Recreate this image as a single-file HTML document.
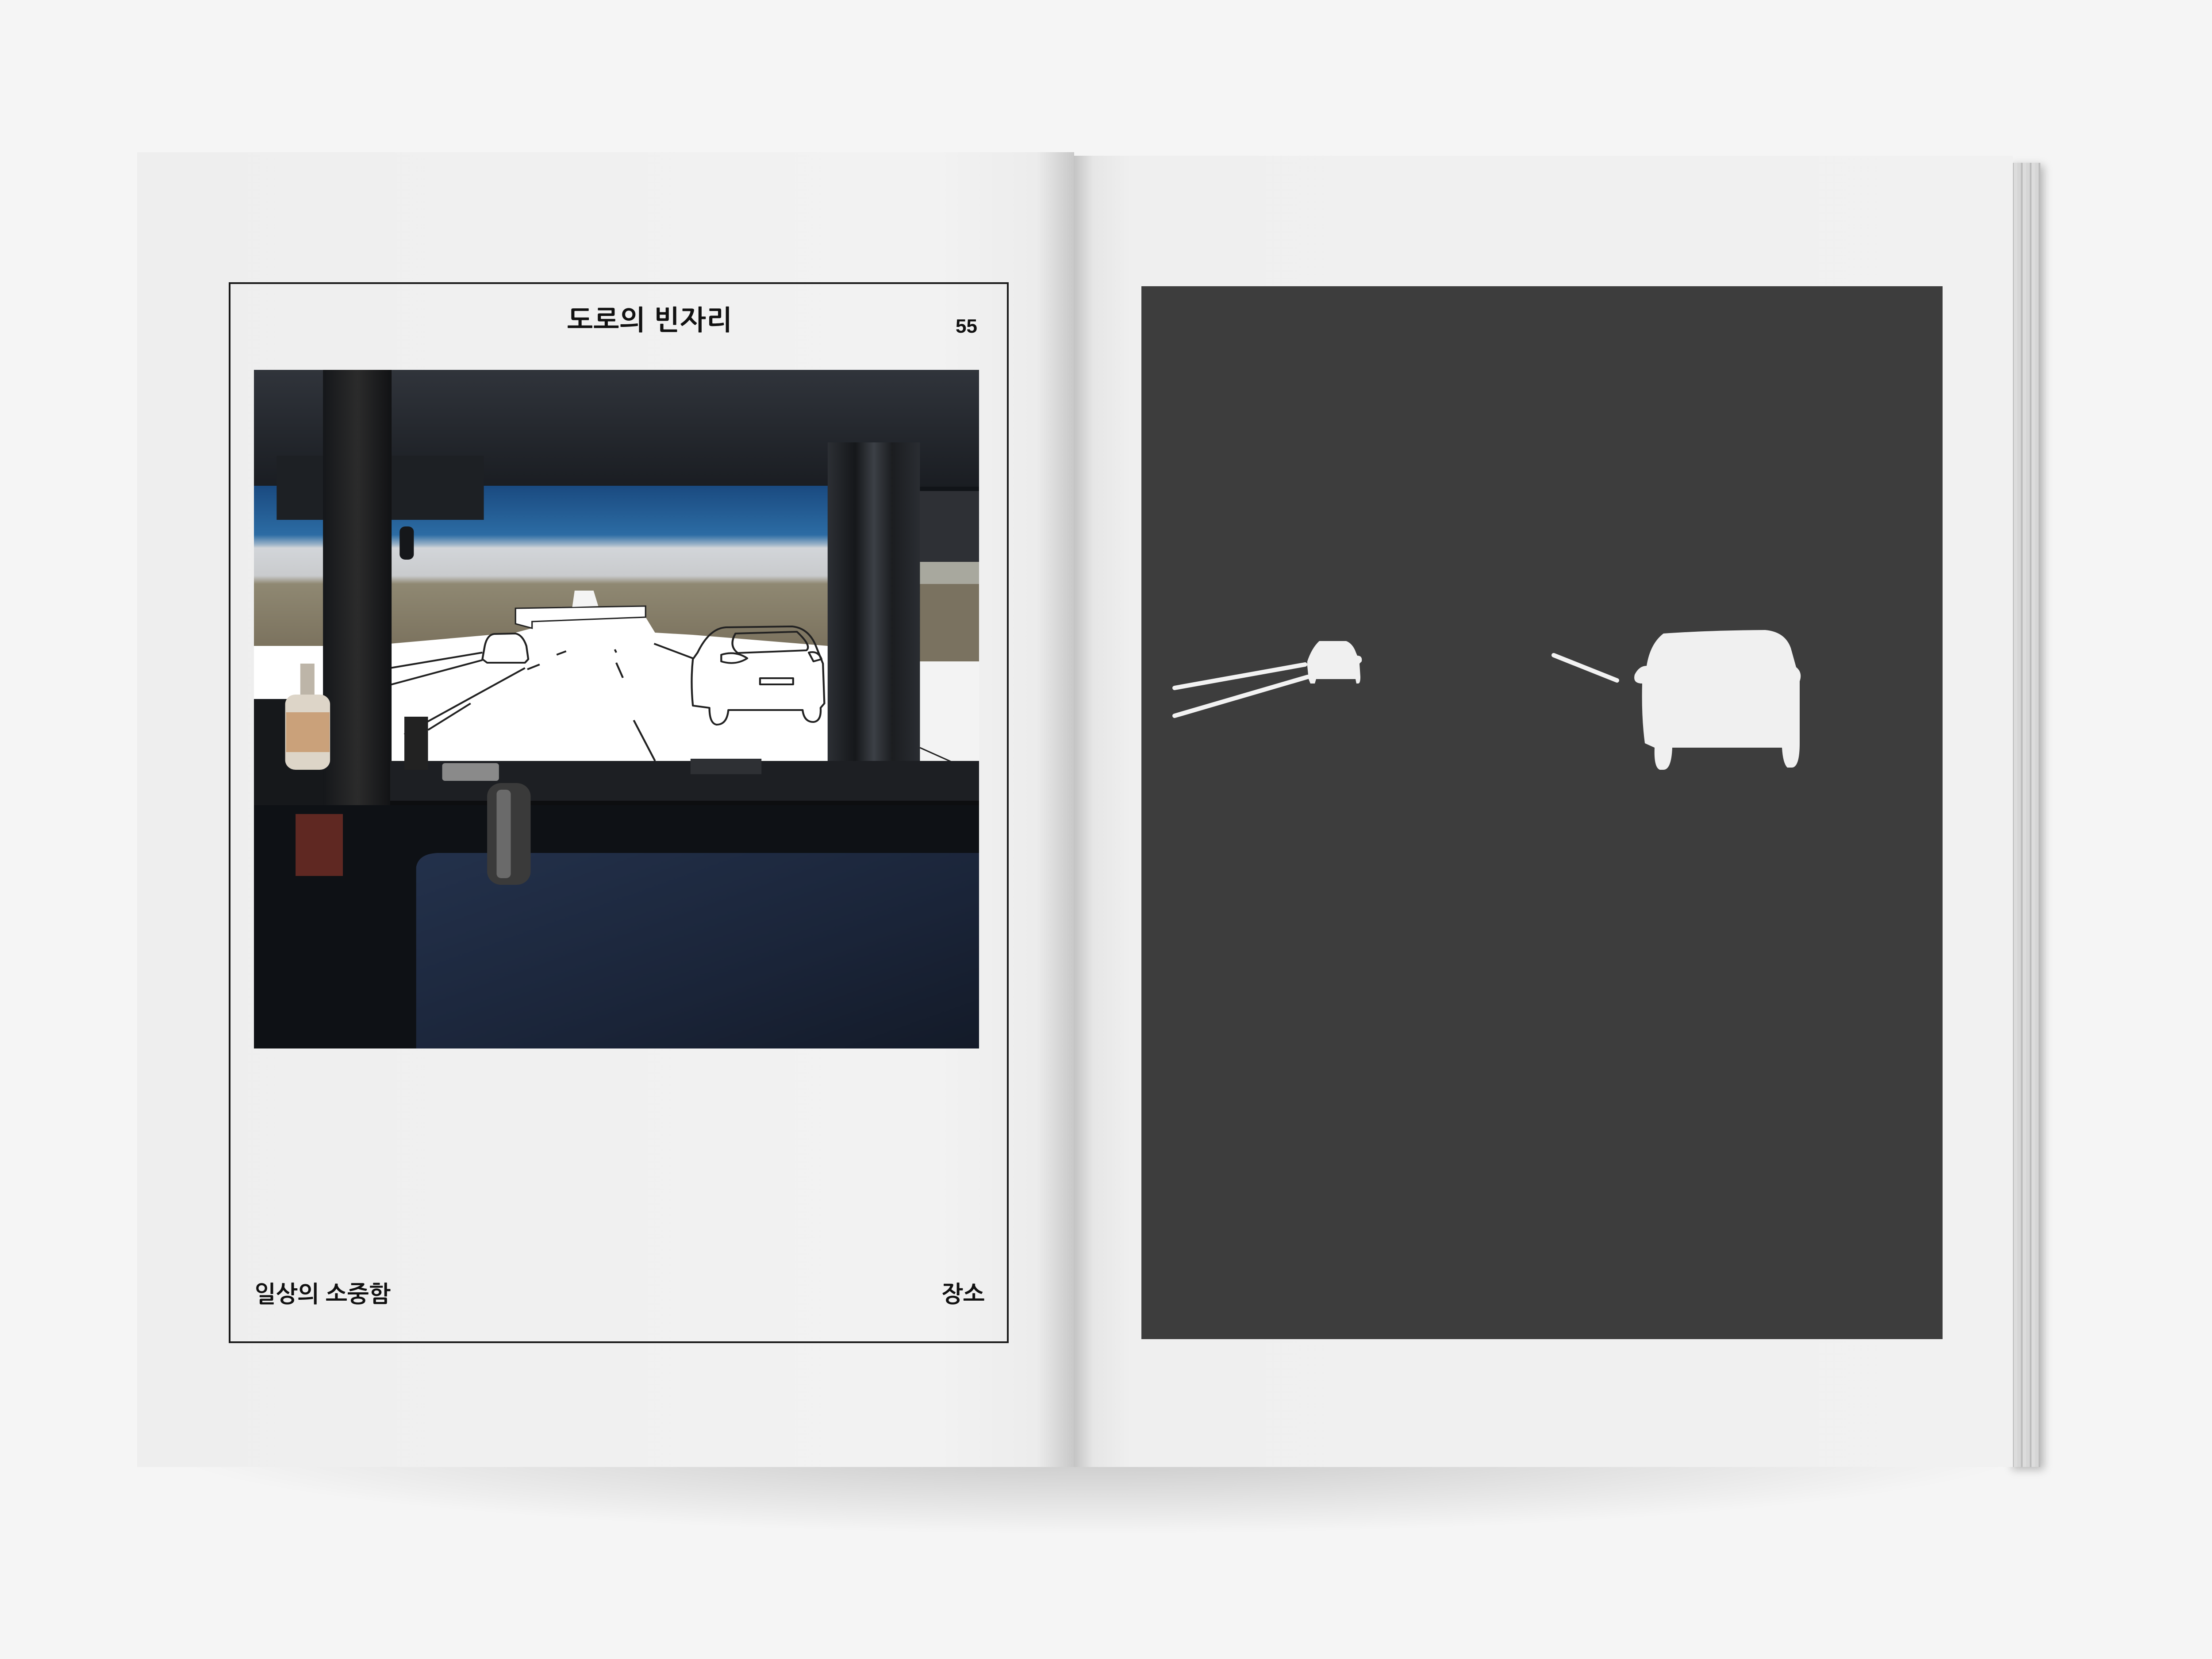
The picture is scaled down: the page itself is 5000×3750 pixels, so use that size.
<!DOCTYPE html>
<html><head><meta charset="utf-8"><style>
html,body{margin:0;padding:0}
body{width:5000px;height:3750px;position:relative;overflow:hidden;background:#f5f5f5;font-family:"Liberation Sans","NanumGothic","Noto Sans CJK KR",sans-serif}
.a{position:absolute}
.t{position:absolute;color:#111;font-family:"Liberation Sans","NanumGothic","Noto Sans CJK KR",sans-serif;font-weight:bold;white-space:nowrap;line-height:1}
</style></head><body>
<div class="a" style="left:330px;top:3230px;width:4300px;height:240px;background:radial-gradient(ellipse at 50% 15%,rgba(0,0,0,.2),rgba(0,0,0,0) 70%)"></div>
<div class="a" style="left:4540px;top:368px;width:72px;height:2948px;background:repeating-linear-gradient(90deg,#d6d6d6 0 8px,#bcbcbc 8px 12px,#dcdcdc 12px 20px);box-shadow:8px 6px 18px rgba(0,0,0,.25)"></div>
<div class="a" style="left:310px;top:344px;width:2118px;height:2972px;background:linear-gradient(90deg,#eeeeee 0%,#f2f2f2 85%,#ececec 96%,#c8c8c8 100%)"></div>
<div class="a" style="left:2428px;top:352px;width:2122px;height:2964px;background:linear-gradient(90deg,#c4c4c4 0%,#e6e6e6 2%,#efefef 6%,#f1f1f1 100%)"></div>
<div class="a" style="left:517px;top:638px;width:1755px;height:2390px;border:4px solid #1a1a1a"></div>
<div class="t" style="left:1282px;top:694px;font-size:62px;letter-spacing:1px">도로의 빈자리</div>
<div class="t" style="left:2160px;top:716px;font-size:44px">55</div>
<div class="t" style="left:575px;top:2900px;font-size:52px">일상의 소중함</div>
<div class="t" style="left:2128px;top:2900px;font-size:52px">장소</div>
<svg class="a" style="left:574px;top:836px" width="1639" height="1534" viewBox="12 16 1533 1534" preserveAspectRatio="none">
  <defs>
    <linearGradient id="sky" x1="0" y1="0" x2="0" y2="1">
      <stop offset="0" stop-color="#1a4a80"/><stop offset=".3" stop-color="#2c6ca4"/>
      <stop offset=".36" stop-color="#9db4c8"/><stop offset=".38" stop-color="#d2d5d9"/><stop offset=".55" stop-color="#c9cbcd"/>
      <stop offset=".6" stop-color="#8f8872"/><stop offset="1" stop-color="#7a715d"/>
    </linearGradient>
    <linearGradient id="ceil" x1="0" y1="0" x2="0" y2="1"><stop offset="0" stop-color="#30343b"/><stop offset="1" stop-color="#1a1d22"/></linearGradient>
    <linearGradient id="pan" x1="0" y1="0" x2="1" y2="1"><stop offset="0" stop-color="#23314b"/><stop offset=".6" stop-color="#1a2438"/><stop offset="1" stop-color="#131a28"/></linearGradient>
    <linearGradient id="pil" x1="0" y1="0" x2="1" y2="0"><stop offset="0" stop-color="#15171a"/><stop offset=".5" stop-color="#2b2b2b"/><stop offset="1" stop-color="#111214"/></linearGradient>
    <linearGradient id="rp" x1="0" y1="0" x2="1" y2="0"><stop offset="0" stop-color="#2c2f34"/><stop offset=".3" stop-color="#15171a"/><stop offset=".5" stop-color="#3c4046"/><stop offset=".7" stop-color="#1b1d20"/><stop offset="1" stop-color="#2a2d32"/></linearGradient>
  </defs>
  <rect x="0" y="0" width="1600" height="1600" fill="#111418"/>
  <rect x="12" y="15" width="1533" height="265" fill="url(#ceil)"/>
  <rect x="12" y="278" width="300" height="370" fill="url(#sky)"/>
  <rect x="300" y="278" width="925" height="370" fill="url(#sky)"/>
  <path d="M12 640 L160 640 L160 760 L12 760 Z" fill="#fff"/>
  <path d="M300 635 L565 610 L600 600 L600 585 L840 575 L860 610 L940 615 L1225 640 L1225 905 L300 905 Z" fill="#fff"/>
  <path d="M565 555 L840 550 L840 575 L600 585 L600 600 L565 590Z" fill="#fff" stroke="#222" stroke-width="3"/>
  <path d="M690 515 L730 515 L740 550 L685 552Z" fill="#f4f4f4"/>
  <g stroke="#222" stroke-width="4" fill="none" stroke-linejoin="round">
    <path d="M300 690 L495 655 M300 728 L495 672 M330 840 L585 690 M380 830 L470 770 M815 808 L860 900 M775 648 L778 655 M778 678 L792 712 M652 660 L672 652 M590 693 L616 682 M858 635 L940 668"/>
    <path d="M500 640 Q505 615 520 613 L565 612 Q580 615 588 640 L592 670 L585 678 L505 678 L495 670 Z"/>
    <path d="M950 655 Q975 600 1010 598 L1150 596 Q1185 600 1200 640 L1215 680 L1218 770 L1210 780 Q1212 810 1195 812 Q1175 812 1172 785 L1015 785 Q1012 818 990 818 Q975 815 975 780 L940 775 Q935 720 940 670 Z"/>
    <path d="M1030 612 L1160 608 Q1192 640 1180 650 L1035 656 Q1015 640 1030 612Z"/>
    <rect x="1082" y="713" width="70" height="14"/>
    <path d="M1000 660 Q1030 650 1055 668 Q1030 685 1000 675Z M1185 655 Q1205 650 1212 670 L1195 675Z"/>
  </g>
  <rect x="1420" y="290" width="125" height="680" fill="#7a7260"/>
  <rect x="1420" y="290" width="125" height="160" fill="#2e3035"/>
  <rect x="1420" y="450" width="125" height="50" fill="#a8a89e"/>
  <rect x="1420" y="675" width="125" height="290" fill="#f3f3f3"/>
  <path d="M1420 870 L1545 930" stroke="#222" stroke-width="3"/>
  <rect x="1225" y="180" width="195" height="800" fill="url(#rp)"/>
  <rect x="60" y="210" width="438" height="145" fill="#1d2024"/>
  <rect x="320" y="370" width="30" height="75" rx="12" fill="#15171a"/>
  <rect x="158" y="15" width="145" height="1540" fill="url(#pil)"/>
  <rect x="300" y="900" width="1245" height="105" fill="#1d1f23"/>
  <rect x="300" y="990" width="1245" height="40" fill="#0d0e10"/>
  <rect x="410" y="905" width="120" height="40" rx="6" fill="#8a8a8a"/>
  <rect x="935" y="895" width="150" height="35" fill="#2e3034"/>
  <rect x="12" y="1000" width="1533" height="560" fill="#0e1115"/>
  <path d="M355 1140 Q360 1110 400 1108 L1545 1108 L1545 1560 L355 1560 Z" fill="url(#pan)"/>
  <rect x="12" y="760" width="146" height="240" fill="#16181b"/>
  <rect x="78" y="750" width="95" height="170" rx="22" fill="#ddd5c8"/>
  <rect x="80" y="790" width="92" height="90" fill="#c28a58" opacity=".7"/>
  <rect x="110" y="680" width="30" height="70" fill="#bdb5a8"/>
  <rect x="505" y="950" width="92" height="230" rx="30" fill="#3a3a3a"/>
  <rect x="525" y="965" width="30" height="200" rx="10" fill="#6a6a6a"/>
  <rect x="330" y="800" width="50" height="120" fill="#222"/>
  <rect x="100" y="1020" width="100" height="140" fill="#b04030" opacity=".5"/>
</svg>
<div class="a" style="left:2580px;top:647px;width:1811px;height:2380px;background:#3d3d3d"></div>
<svg class="a" style="left:0;top:0" width="5000" height="3750" viewBox="0 0 5000 3750">
  <g stroke="#f2f2f2" stroke-width="10" stroke-linecap="round" fill="none">
    <path d="M2655 1555 L2950 1502"/>
    <path d="M2655 1618 L2956 1530"/>
    <path d="M3512 1481 L3655 1538"/>
  </g>
  <g fill="#f0f0f0">
    <path d="M2982 1449 L3043 1449 Q3058 1455 3065 1475 L3068 1482 Q3080 1482 3078 1495 L3073 1500 L3075 1530 Q3075 1545 3070 1545 L3066 1545 L3064 1535 L2975 1535 L2972 1545 L2962 1545 L2958 1535 L2955 1505 L2955 1495 Q2965 1465 2982 1449Z"/>
    <path d="M3760 1432 Q3860 1425 3990 1424 Q4035 1428 4048 1465 L4060 1508 Q4075 1520 4068 1540 L4068 1680 Q4068 1735 4050 1735 L4040 1735 Q4030 1725 4028 1690 L3780 1690 Q3778 1740 3760 1740 L3752 1740 Q3738 1735 3740 1690 L3718 1680 Q3710 1620 3712 1545 Q3690 1545 3695 1525 Q3705 1505 3722 1505 Q3730 1455 3760 1432Z"/>
  </g>
</svg>
</body></html>
